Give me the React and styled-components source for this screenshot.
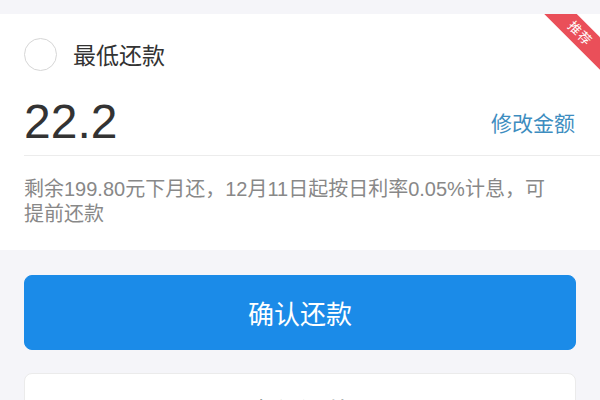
import React from "react";
import styled, { createGlobalStyle } from "styled-components";

const GlobalStyle = createGlobalStyle`
  html, body {
    margin: 0;
    padding: 0;
    background: #f5f5f9;
    font-family: "Liberation Sans", "Noto Sans CJK SC", sans-serif;
  }
  * {
    box-sizing: border-box;
  }
`;

function App() {
  return (
    <>
      <GlobalStyle />
      <Page>
        <Card>
          <Ribbon>推荐</Ribbon>
          <OptionRow>
            <Radio />
            <OptionLabel>最低还款</OptionLabel>
          </OptionRow>
          <AmountRow>
            <Amount>22.2</Amount>
            <EditLink>修改金额</EditLink>
          </AmountRow>
          <Note>
            剩余199.80元下月还，12月11日起按日利率0.05%计息，可提前还款
          </Note>
        </Card>
        <Actions>
          <Button primary>确认还款</Button>
          <Button>全额还款</Button>
        </Actions>
      </Page>
    </>
  );
}

export default App;

const Page = styled.div`
  padding-top: 14px;
  min-height: 400px;
  background: #f5f5f9;
`;

const Card = styled.div`
  position: relative;
  overflow: hidden;
  background: #fff;
  padding-left: 24px;
`;

const Ribbon = styled.div`
  position: absolute;
  top: 8px;
  left: 530px;
  width: 100px;
  height: 23px;
  background: #ea4f59;
  color: #fff;
  font-size: 13px;
  line-height: 23px;
  text-align: center;
  letter-spacing: 1px;
  transform: rotate(45deg);
`;

const OptionRow = styled.div`
  display: flex;
  align-items: center;
  height: 80px;
`;

const Radio = styled.span`
  width: 33px;
  height: 33px;
  border: 1.5px solid #d6d6d6;
  border-radius: 50%;
`;

const OptionLabel = styled.span`
  margin-left: 16px;
  font-size: 23px;
  color: #333;
`;

const AmountRow = styled.div`
  display: flex;
  align-items: center;
  justify-content: space-between;
  height: 62px;
  padding: 0 25px 6px 0;
  border-bottom: 1px solid #ececec;
`;

const Amount = styled.span`
  font-size: 48px;
  color: #333;
  line-height: 1;
`;

const EditLink = styled.span`
  font-size: 21px;
  color: #3d8dc0;
`;

const Note = styled.p`
  margin: 0;
  padding: 21px 50px 23px 0;
  font-size: 20px;
  line-height: 25px;
  color: #888;
`;

const Actions = styled.div`
  display: flex;
  flex-direction: column;
  gap: 23px;
  padding: 25px 24px 0;
`;

const Button = styled.div`
  display: flex;
  align-items: center;
  justify-content: center;
  height: 75px;
  border-radius: 8px;
  font-size: 26px;
  background: ${(p) => (p.primary ? "#1b8be8" : "#fff")};
  color: ${(p) => (p.primary ? "#fff" : "#333")};
  border: 1px solid ${(p) => (p.primary ? "#1b8be8" : "#ebebeb")};
`;
